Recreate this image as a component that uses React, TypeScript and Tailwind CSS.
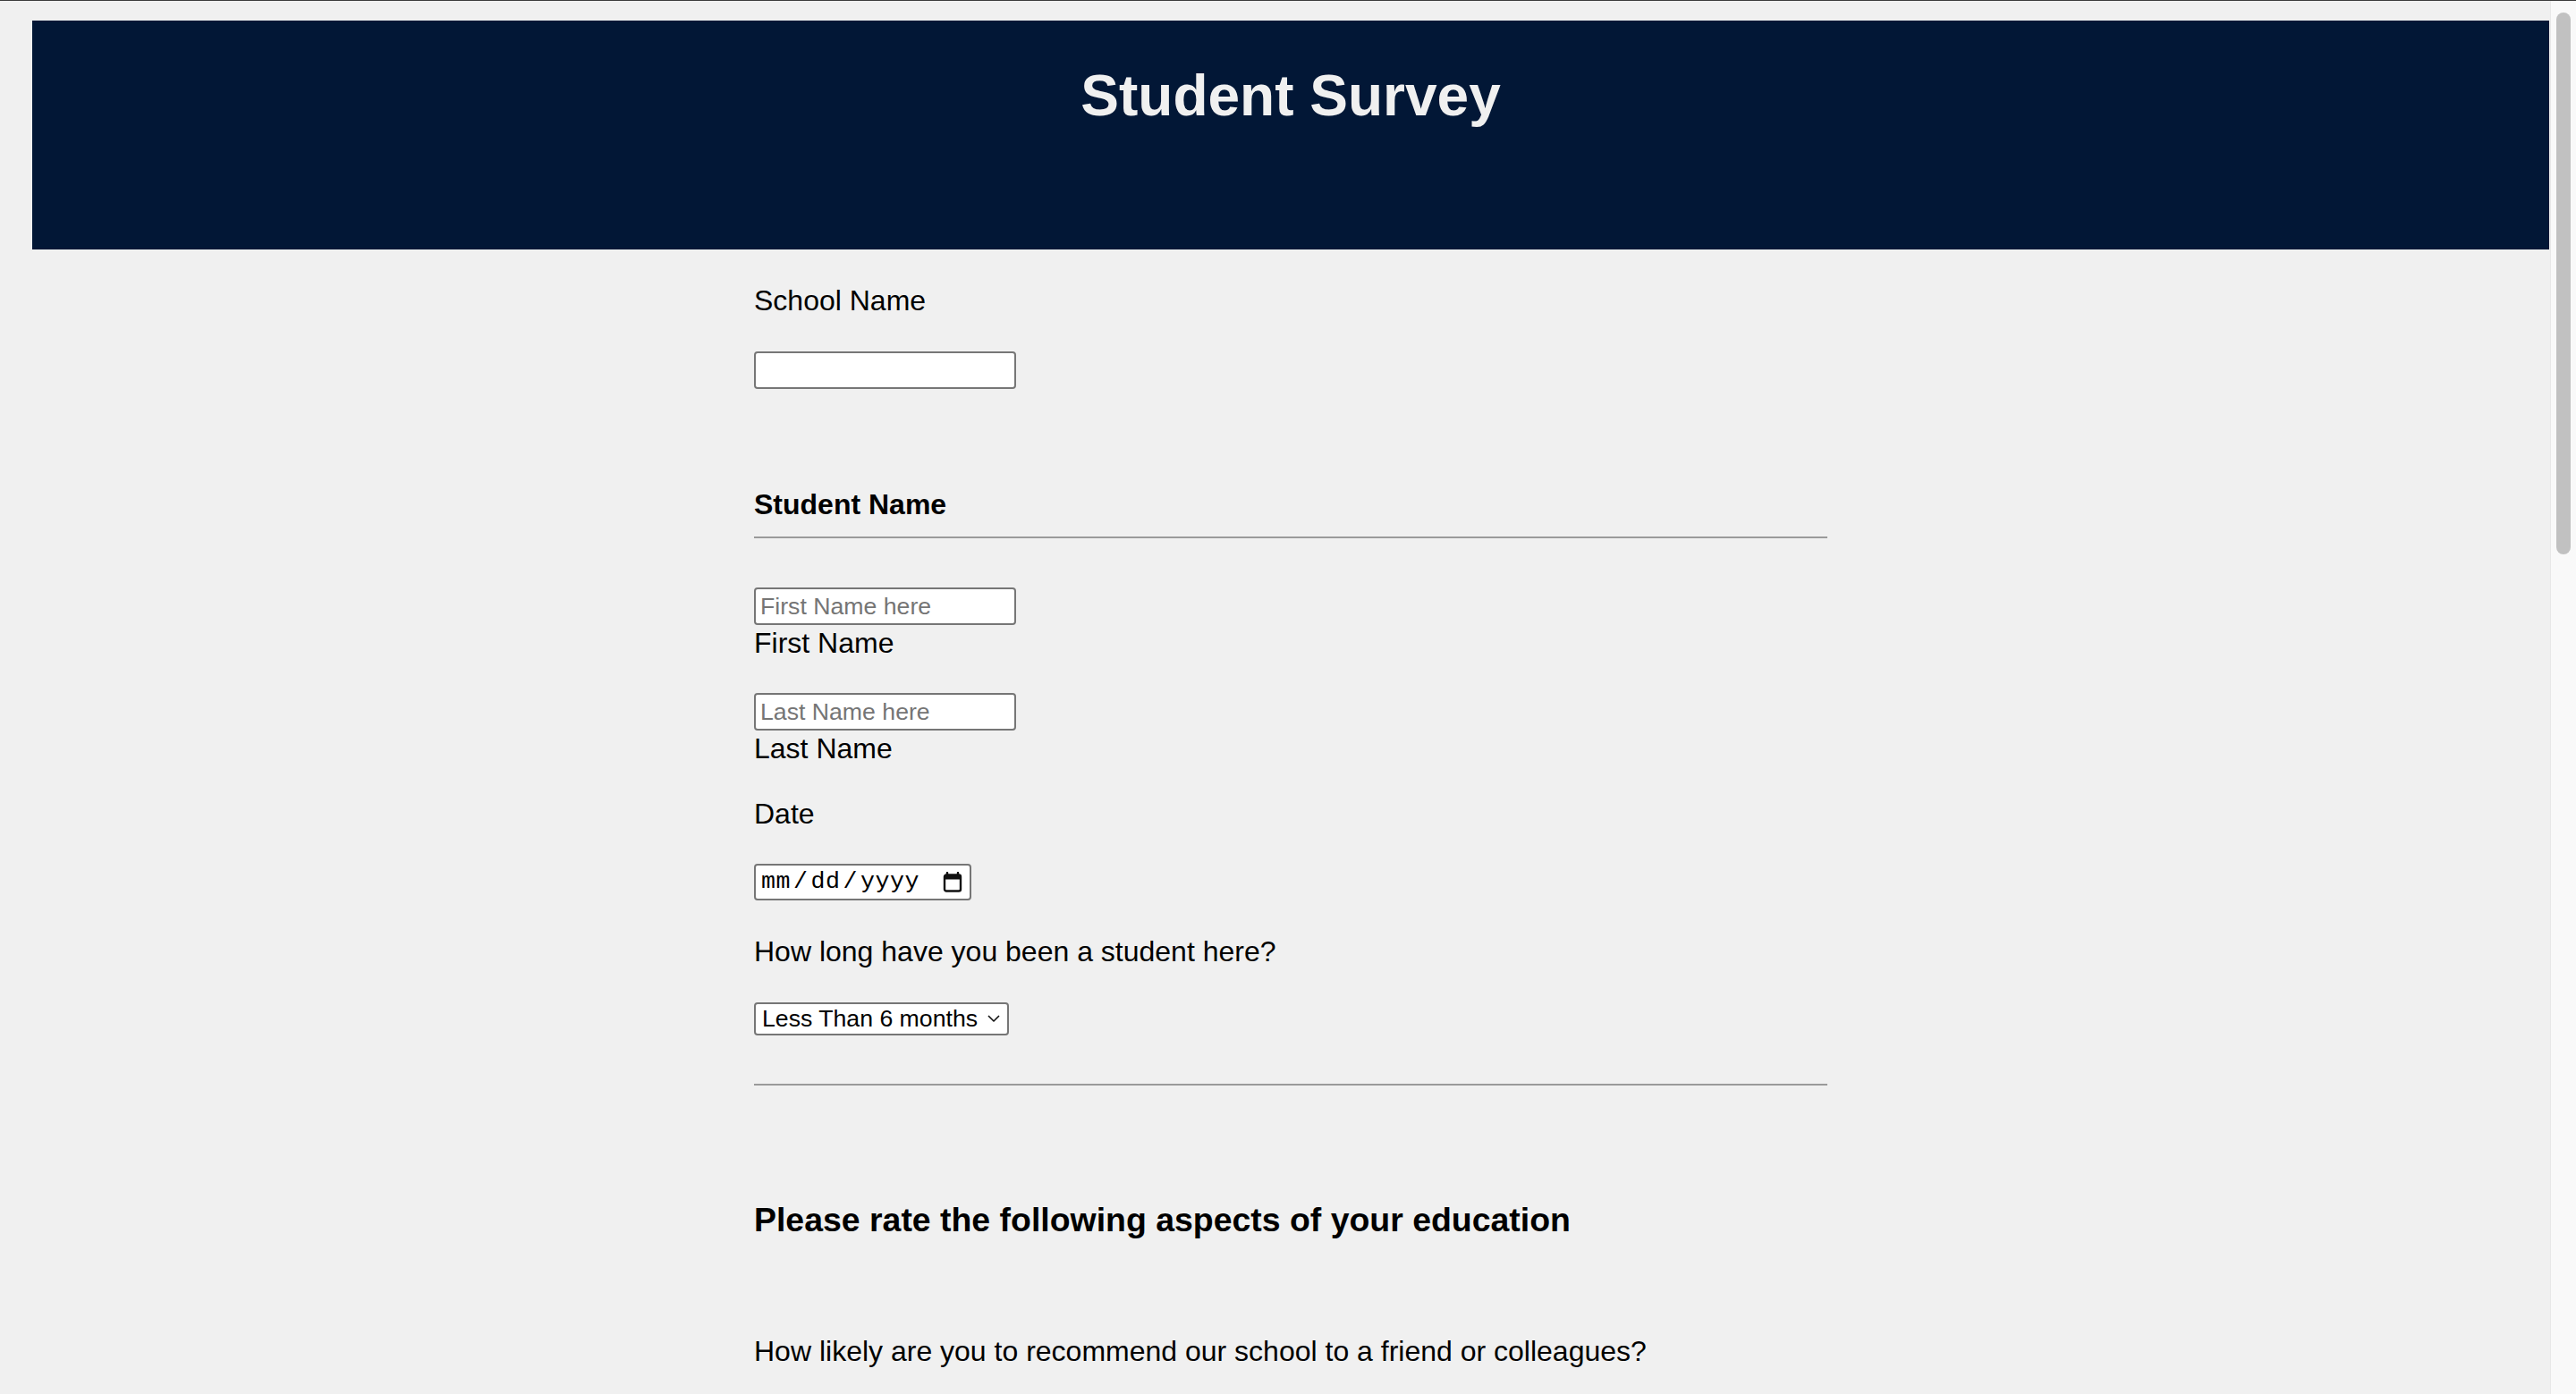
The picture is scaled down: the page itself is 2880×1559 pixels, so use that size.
import React from 'react'

const Label = ({ children, className = '' }: { children: React.ReactNode; className?: string }) => (
  <div className={`text-[32px] leading-[37px] ${className}`}>{children}</div>
)

const TextBox = ({ placeholder, className = '' }: { placeholder?: string; className?: string }) => (
  <input
    type="text"
    placeholder={placeholder}
    className={`block h-[42px] w-[293px] rounded-[4px] border-2 border-[#767676] bg-white px-[5px] text-[26.67px] placeholder:text-[#757575] outline-none ${className}`}
  />
)

const App = () => {
  return (
    <div className="flex h-[1559px] flex-col overflow-hidden bg-[#f0f0f0] font-['Liberation_Sans',Arial,sans-serif] text-black">
      <div className="h-px bg-[#3c3c3c]" />

      <div className="flex min-h-0 flex-1">
        {/* page */}
        <main className="flex-1 pl-[36px] pr-[1px]">
          <header className="mt-[22px] h-[256px] bg-[#021736] pt-[47px] text-center">
            <h1 className="text-[64px] font-bold leading-[74px] text-[#f0f0f0]">Student Survey</h1>
          </header>

          <form className="mx-auto w-[1200px]">
            <Label className="mt-[39px]">School Name</Label>
            <TextBox className="mt-[38px]" />

            <Label className="mt-[111px] font-bold">Student Name</Label>
            <div className="mt-[17px] h-[2px] bg-[#9a9a9a]" />

            <TextBox className="mt-[55px]" placeholder="First Name here" />
            <Label className="mt-[2px]">First Name</Label>

            <TextBox className="mt-[37px]" placeholder="Last Name here" />
            <Label className="mt-[2px]">Last Name</Label>

            <Label className="mt-[36px]">Date</Label>
            {/* date field */}
            <div className="mt-[37px] flex h-[41px] w-[243px] items-center justify-between rounded-[4px] border-2 border-[#767676] bg-white pl-[6px] pr-[8px]">
              <span className="font-['Liberation_Mono',monospace] text-[26.67px] leading-none tracking-[0.5px]">
                mm<span className="px-[3px]">/</span>dd<span className="px-[3px]">/</span>yyyy
              </span>
              <svg width="22" height="23" viewBox="0 0 22 23" fill="none">
                <path d="M5 1v4M17 1v4" stroke="#111" strokeWidth="2.4" strokeLinecap="round" />
                <rect x="2" y="3.5" width="18" height="18" rx="2" stroke="#111" strokeWidth="2.4" />
                <rect x="2" y="3.5" width="18" height="5" fill="#111" />
              </svg>
            </div>

            <Label className="mt-[39px]">How long have you been a student here?</Label>
            <div className="relative mt-[38px] w-[285px]">
              <select className="block h-[37px] w-full appearance-none rounded-[4px] border-2 border-[#767676] bg-white pl-[7px] text-[26.67px] leading-none outline-none">
                <option>Less Than 6 months</option>
                <option>6 months - 1 year</option>
                <option>More than 1 year</option>
              </select>
              <svg className="pointer-events-none absolute right-[10px] top-[14px]" width="14" height="8" viewBox="0 0 14 8" fill="none">
                <path d="M1 1l6 6 6-6" stroke="#111" strokeWidth="1.6" strokeLinejoin="round" />
              </svg>
            </div>

            <div className="mt-[54px] h-[2px] bg-[#9a9a9a]" />

            <h3 className="mt-[129px] text-[37.44px] font-bold leading-[43px]">
              Please rate the following aspects of your education
            </h3>

            <Label className="mt-[107px]">How likely are you to recommend our school to a friend or colleagues?</Label>
          </form>
        </main>

        {/* scrollbar */}
        <div className="w-[29px] border-l border-[#e8e8e8] bg-[#f9f9f9] pt-[13px] pl-[6px]">
          <div className="h-[606px] w-[16px] rounded-full bg-[#c1c1c1]" />
        </div>
      </div>
    </div>
  )
}

export default App
